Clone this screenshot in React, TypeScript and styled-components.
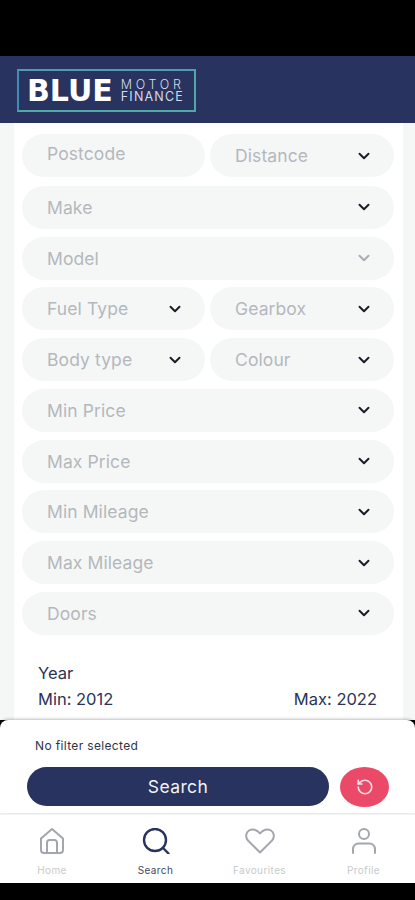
import { createGlobalStyle, styled } from "styled-components";
import { ChevronDown, RotateCcw } from "lucide-react";

const GlobalStyle = createGlobalStyle`
  html, body {
    margin: 0;
    padding: 0;
    background: #000;
  }
  * {
    box-sizing: border-box;
  }
`;

const Screen = styled.div`
  width: 415px;
  height: 900px;
  background: #000;
  display: flex;
  flex-direction: column;
  overflow: hidden;
  font-family: "Inter", "Liberation Sans", sans-serif;
`;

const Gap = styled.div<{ $h: number }>`
  height: ${(p) => p.$h}px;
  flex: none;
  background: #000;
`;

const Header = styled.header`
  height: 67px;
  flex: none;
  background: #28335f;
  padding: 13px 0 0 17px;
`;

const Logo = styled.div`
  width: 179px;
  height: 43px;
  border: 2px solid;
  border-color: #4f9cae #4fa9a5 #4fa9a5 #3f8db4;
  display: flex;
  align-items: center;
  padding-left: 8px;
  gap: 8px;
  color: #fff;
`;

const LogoBig = styled.span`
  font-family: "DejaVu Sans", sans-serif;
  font-size: 30px;
  font-weight: 700;
  line-height: 30px;
`;

const LogoSmall = styled.span`
  display: flex;
  flex-direction: column;
  font-size: 12.5px;
  line-height: 12px;
  color: #d5dae6;
`;

const MotorLine = styled.span`
  letter-spacing: 3.7px;
  font-weight: 300;
`;

const FinanceLine = styled.span`
  letter-spacing: 1.2px;
`;

const Body = styled.main`
  height: 597px;
  flex: none;
  background: #f5f7f7;
  padding: 0 12px 0 14px;
`;

const Sheet = styled.div`
  height: 100%;
  background: #fff;
  padding: 11px 9px 0 8px;
  display: flex;
  flex-direction: column;
  gap: 7.75px;
`;

const Field = styled.div<{ $raised?: boolean }>`
  flex: none;
  height: 43px;
  border-radius: 22px;
  background: #f5f7f7;
  display: flex;
  align-items: center;
  justify-content: space-between;
  padding: ${(p) => (p.$raised ? "0 21px 5px 25px" : "0 21px 0 25px")};
  font-size: 17.5px;
  letter-spacing: 0.1px;
  color: #b4b8bc;
`;

const Row = styled.div<{ $first?: boolean }>`
  display: grid;
  grid-template-columns: 183px 184px;
  gap: 5px;
  margin-bottom: ${(p) => (p.$first ? 1 : 0)}px;
`;

const Chevron = styled(ChevronDown)<{ $muted?: boolean }>`
  width: 18px;
  height: 18px;
  stroke-width: 2.6px;
  color: ${(p) => (p.$muted ? "#a9adb2" : "#1a1d26")};
  flex: none;
`;

const Year = styled.section`
  padding: 17px 17px 0 16px;
  color: #2a3358;
  font-size: 16.5px;
  line-height: 26px;
`;

const YearRange = styled.div`
  display: flex;
  justify-content: space-between;
`;

const FilterPanel = styled.section`
  height: 93px;
  flex: none;
  background: #fff;
  border-radius: 8px 8px 0 0;
  box-shadow: 0 -1px 3px rgba(0, 0, 0, 0.25);
  padding: 18px 26px 0 27px;
  position: relative;
`;

const FilterNote = styled.div`
  font-size: 12px;
  letter-spacing: 0.35px;
  line-height: 16px;
  color: #2f3448;
  padding-left: 8px;
  margin-bottom: 13px;
`;

const Actions = styled.div`
  display: flex;
  gap: 11px;
`;

const SearchButton = styled.button`
  flex: 1;
  height: 39px;
  border: none;
  border-radius: 20px;
  background: #28335f;
  color: #f1f2f6;
  font-family: inherit;
  font-size: 17.5px;
  font-weight: 400;
  letter-spacing: 0.4px;
`;

const ResetButton = styled.button`
  width: 49px;
  height: 40px;
  border: none;
  border-radius: 50%;
  background: #ea4a68;
  color: #f8dfe4;
  display: flex;
  align-items: center;
  justify-content: center;
  padding: 0;
`;

const Nav = styled.nav`
  height: 70px;
  flex: none;
  background: #fff;
  border-top: 2px solid #f3f4f5;
  display: grid;
  grid-template-columns: 104px 103px 105px 103px;
`;

const NavItem = styled.div<{ $active?: boolean }>`
  display: flex;
  flex-direction: column;
  align-items: center;
  padding-top: 13px;
  color: ${(p) => (p.$active ? "#28335f" : "#a3a7ad")};
  font-size: 10px;
  line-height: 14px;

  span {
    margin-top: 9px;
    color: ${(p) => (p.$active ? "#444a5e" : "#c6c9cd")};
    letter-spacing: 0.4px;
  }
`;

const NavIcon = styled.svg.attrs({
  viewBox: "0 0 32 26",
  width: 32,
  height: 26,
  fill: "none",
  stroke: "currentColor",
  strokeLinecap: "round",
  strokeLinejoin: "round",
})`
  display: block;
  flex: none;
`;

function Select({ label, muted }: { label: string; muted?: boolean }) {
  return (
    <Field>
      {label}
      <Chevron $muted={muted} />
    </Field>
  );
}

function App() {
  return (
    <>
      <GlobalStyle />
      <Screen>
        <Gap $h={56} />
        <Header>
          <Logo>
            <LogoBig>BLUE</LogoBig>
            <LogoSmall>
              <MotorLine>MOTOR</MotorLine>
              <FinanceLine>FINANCE</FinanceLine>
            </LogoSmall>
          </Logo>
        </Header>
        <Body>
          <Sheet>
            <Row $first>
              <Field $raised>Postcode</Field>
              <Select label="Distance" />
            </Row>
            <Select label="Make" />
            <Select label="Model" muted />
            <Row>
              <Select label="Fuel Type" />
              <Select label="Gearbox" />
            </Row>
            <Row>
              <Select label="Body type" />
              <Select label="Colour" />
            </Row>
            <Select label="Min Price" />
            <Select label="Max Price" />
            <Select label="Min Mileage" />
            <Select label="Max Mileage" />
            <Select label="Doors" />
            <Year>
              Year
              <YearRange>
                <span>Min: 2012</span>
                <span>Max: 2022</span>
              </YearRange>
            </Year>
          </Sheet>
        </Body>
        <FilterPanel>
          <FilterNote>No filter selected</FilterNote>
          <Actions>
            <SearchButton>Search</SearchButton>
            <ResetButton aria-label="Reset">
              <RotateCcw size={18} strokeWidth={2.2} />
            </ResetButton>
          </Actions>
        </FilterPanel>
        <Nav>
          <NavItem>
            <NavIcon strokeWidth={2}>
              <path d="M5 10.5 16 1l11 9.5V22a3 3 0 0 1-3 3H8a3 3 0 0 1-3-3Z" />
              <path d="M11 25V14.5a2.500 2.500 0 0 1 2.500-2.500h5a2.500 2.500 0 0 1 2.500 2.500V25" />
            </NavIcon>
            <span>Home</span>
          </NavItem>
          <NavItem $active>
            <NavIcon strokeWidth={2.4}>
              <circle cx="15" cy="12" r="11" />
              <path d="m23 20 5.500 5.500" />
            </NavIcon>
            <span>Search</span>
          </NavItem>
          <NavItem>
            <NavIcon strokeWidth={2}>
              <path d="M16 24.500 4 12.500C1 9 2 4.500 5 2.500c3.500-2.200 8-1 11 3 3-4 7.500-5.200 11-3 3 2 4 6.500 1 10Z" />
            </NavIcon>
            <span>Favourites</span>
          </NavItem>
          <NavItem>
            <NavIcon strokeWidth={2}>
              <circle cx="16" cy="6" r="5" />
              <path d="M5 25v-4a5.500 5.500 0 0 1 5.500-5.500h11A5.500 5.500 0 0 1 27 21v4" />
            </NavIcon>
            <span>Profile</span>
          </NavItem>
        </Nav>
        <Gap $h={17} />
      </Screen>
    </>
  );
}

export default App;
